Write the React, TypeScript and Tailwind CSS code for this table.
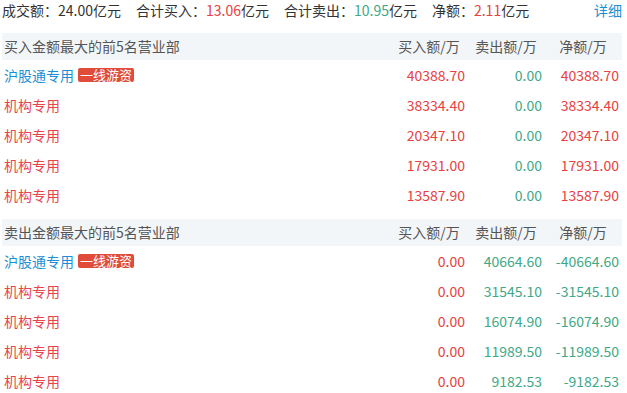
const RED = "text-[#e8413f]";
const GREEN = "text-[#41a886]";

type Row = { name: string; tag?: string; buy: string; sell: string; net: string };

const buyRows: Row[] = [
  { name: "沪股通专用", tag: "一线游资", buy: "40388.70", sell: "0.00", net: "40388.70" },
  { name: "机构专用", buy: "38334.40", sell: "0.00", net: "38334.40" },
  { name: "机构专用", buy: "20347.10", sell: "0.00", net: "20347.10" },
  { name: "机构专用", buy: "17931.00", sell: "0.00", net: "17931.00" },
  { name: "机构专用", buy: "13587.90", sell: "0.00", net: "13587.90" },
];

const sellRows: Row[] = [
  { name: "沪股通专用", tag: "一线游资", buy: "0.00", sell: "40664.60", net: "-40664.60" },
  { name: "机构专用", buy: "0.00", sell: "31545.10", net: "-31545.10" },
  { name: "机构专用", buy: "0.00", sell: "16074.90", net: "-16074.90" },
  { name: "机构专用", buy: "0.00", sell: "11989.50", net: "-11989.50" },
  { name: "机构专用", buy: "0.00", sell: "9182.53", net: "-9182.53" },
];

const Section = ({ title, rows, sell }: { title: string; rows: Row[]; sell?: boolean }) => (
  <div>
    <div className="flex items-center h-[27px] bg-[#f3f6f9] text-[#555] pl-[2px] pr-[3px]">
      <div className="flex-1">{title}</div>
      <div className="w-[77px] text-center pl-[5px]">买入额/万</div>
      <div className="w-[77px] text-center pl-[5px]">卖出额/万</div>
      <div className="w-[77px] text-center pl-[5px]">净额/万</div>
    </div>
    {rows.map((r, i) => (
      <div key={i} className="flex items-center h-[30px] pl-[2px] pr-[3px]">
        <div className="flex-1 flex items-center">
          {r.tag ? (
            <>
              <span className="text-[#1b8fd3]">{r.name}</span>
              <span className="ml-[4px] bg-[#e04b3a] text-white text-[13px] leading-[14px] px-[2px] rounded-[2px]">
                {r.tag}
              </span>
            </>
          ) : (
            <span className="text-[#e8454b]">{r.name}</span>
          )}
        </div>
        <div className={`w-[77px] text-right ${RED}`}>{r.buy}</div>
        <div className={`w-[77px] text-right ${GREEN}`}>{r.sell}</div>
        <div className={`w-[77px] text-right ${sell ? GREEN : RED}`}>{r.net}</div>
      </div>
    ))}
  </div>
);

export default function App() {
  return (
    <div
      className="w-[627px] h-[393px] bg-white text-[14px] text-[#333] overflow-hidden pl-[2px] pr-[5px]"
      style={{ fontFamily: '"Noto Sans CJK SC", "Noto Sans", sans-serif' }}
    >
      <div className="flex items-center h-[20px] gap-[15px]">
        <span>成交额：24.00亿元</span>
        <span>
          合计买入：<span className={RED}>13.06</span>亿元
        </span>
        <span>
          合计卖出：<span className={GREEN}>10.95</span>亿元
        </span>
        <span>
          净额：<span className={RED}>2.11</span>亿元
        </span>
        <span className="ml-auto text-[#1b8fd3]">详细</span>
      </div>
      <div className="mt-[13px]">
        <Section title="买入金额最大的前5名营业部" rows={buyRows} />
      </div>
      <div className="mt-[9px]">
        <Section title="卖出金额最大的前5名营业部" rows={sellRows} sell />
      </div>
    </div>
  );
}
